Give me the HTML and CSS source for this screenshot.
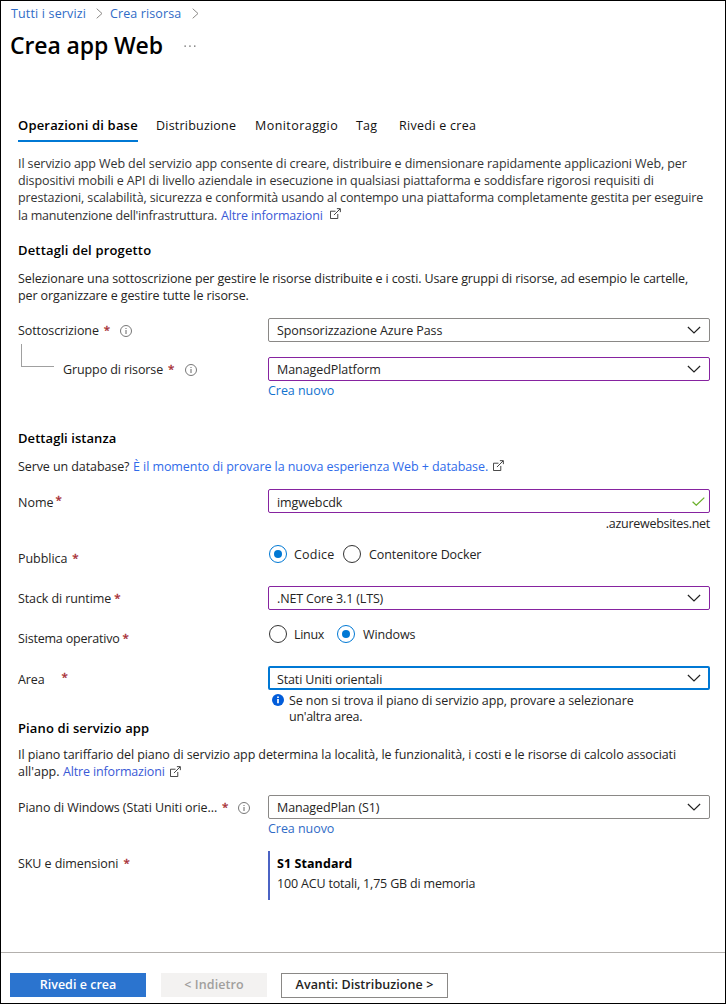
FILE: index.html
```html
<!DOCTYPE html>
<html lang="it">
<head>
<meta charset="utf-8">
<title>Crea app Web</title>
<link rel="stylesheet" href="styles.css">
</head>
<body>
<svg class="defs" aria-hidden="true">
  <symbol id="chevron" viewBox="0 0 14 8"><path d="M.9 1 7 7 13.1 1" fill="none" stroke="#222" stroke-width="1.2"/></symbol>
  <symbol id="crumb" viewBox="0 0 7 11"><path d="M.7 .7 6 5.5.7 10.3" fill="none" stroke="#8a8886" stroke-width="1"/></symbol>
  <symbol id="info" viewBox="0 0 12 12"><circle cx="6" cy="6" r="5.5" fill="none" stroke="#777" stroke-width="1"/><path d="M6 5v4M6 3v1" stroke="#666" stroke-width="1"/></symbol>
  <symbol id="external" viewBox="0 0 12 12"><path d="M6 3.5H.5v8h8V6.5M4.3 7.700 11 1M7.500.7h3.800v3.800" fill="none" stroke="#333" stroke-width="1"/></symbol>
</svg>
<div class="page">
  <nav class="crumbs">
    <a class="link-soft crumb-home">Tutti i servizi</a><svg class="crumb-icon"><use href="#crumb"/></svg>
    <a class="link-soft crumb-new">Crea risorsa</a><svg class="crumb-icon"><use href="#crumb"/></svg>
  </nav>
  <header class="title">
    <h1>Crea app Web</h1>
    <svg class="dots" viewBox="0 0 12 2"><path d="M.5.5h1.300v1.300H.5zM5.300.5h1.300v1.300H5.300zM10.100.5h1.300v1.300h-1.300z" fill="#555"/></svg>
  </header>
  <div class="tabs">
    <span class="tab tab-active">Operazioni di base</span>
    <span class="tab tab-dist">Distribuzione</span>
    <span class="tab tab-mon">Monitoraggio</span>
    <span class="tab tab-tag">Tag</span>
    <span class="tab tab-review">Rivedi e crea</span>
  </div>

  <p class="intro">
    <span class="line">Il servizio app Web del servizio app consente di creare, distribuire e dimensionare rapidamente applicazioni Web, per</span>
    <span class="line line-api">dispositivi mobili e API di livello aziendale in esecuzione in qualsiasi piattaforma e soddisfare rigorosi requisiti di</span>
    <span class="line line-tight">prestazioni, scalabilità, sicurezza e conformità usando al contempo una piattaforma completamente gestita per eseguire</span>
    <span class="line line-last"><span class="tighter">la manutenzione dell'infrastruttura.</span><a class="link more">Altre informazioni</a><svg class="ext"><use href="#external"/></svg></span>
  </p>

  <h2 class="h-project">Dettagli del progetto</h2>
  <p class="project-text">
    <span class="line line-sel">Selezionare una sottoscrizione per gestire le risorse distribuite e i costi. Usare gruppi di risorse, ad esempio le cartelle,</span>
    <span class="line">per organizzare e gestire tutte le risorse.</span>
  </p>

  <div class="row row-sub">
    <div class="label"><span>Sottoscrizione</span><b class="req">*</b><svg class="info"><use href="#info"/></svg></div>
    <div class="select"><span class="v-sub">Sponsorizzazione Azure Pass</span><svg class="chev"><use href="#chevron"/></svg></div>
  </div>
  <div class="row row-group">
    <div class="label"><i class="branch"></i><span>Gruppo di risorse</span><b class="req">*</b><svg class="info"><use href="#info"/></svg></div>
    <div class="select edited"><span class="v-group">ManagedPlatform</span><svg class="chev"><use href="#chevron"/></svg></div>
  </div>
  <div class="below"><a class="link-blue create">Crea nuovo</a></div>

  <h2 class="h-instance">Dettagli istanza</h2>
  <p class="db-line"><span>Serve un database?</span><a class="link-bright">È il momento di provare la nuova esperienza Web + database.</a><svg class="ext"><use href="#external"/></svg></p>

  <div class="row row-name">
    <div class="label low"><span class="l-name">Nome</span><b class="req req-name">*</b></div>
    <div class="select edited low"><span class="v-name">imgwebcdk</span><svg class="check" viewBox="0 0 13 9"><path d="M.6 4.800 4.300 8.200 12.300.6" fill="none" stroke="#6bb02c" stroke-width="1.300"/></svg></div>
  </div>
  <div class="below suffix">.azurewebsites.net</div>

  <div class="row row-publish">
    <div class="label lower"><span class="l-publish">Pubblica</span><b class="req">*</b></div>
    <div class="radios"><i class="radio on"></i><span class="r-code">Codice</span><i class="radio"></i><span class="r-docker">Contenitore Docker</span></div>
  </div>
  <div class="row row-stack">
    <div class="label"><span>Stack di runtime</span><b class="req req-near">*</b></div>
    <div class="select edited"><span class="v-stack">.NET Core 3.1 (LTS)</span><svg class="chev"><use href="#chevron"/></svg></div>
  </div>
  <div class="row row-os">
    <div class="label lower"><span class="l-os">Sistema operativo</span><b class="req req-near">*</b></div>
    <div class="radios"><i class="radio"></i><span class="r-linux">Linux</span><i class="radio on"></i><span class="r-win">Windows</span></div>
  </div>
  <div class="row row-area">
    <div class="label low"><span class="l-area">Area</span><b class="req req-area">*</b></div>
    <div class="select focused low"><span class="v-area">Stati Uniti orientali</span><svg class="chev"><use href="#chevron"/></svg></div>
  </div>
  <div class="hint">
    <svg class="hint-icon" viewBox="0 0 12 12"><circle cx="6" cy="6" r="6" fill="#015cda"/><path d="M6 5v4.200M6 2.400v1.600" stroke="#fff" stroke-width="1.700"/></svg>
    <div><span class="line hint-line">Se non si trova il piano di servizio app, provare a selezionare</span><span class="line tightest">un'altra area.</span></div>
  </div>

  <h2 class="h-plan">Piano di servizio app</h2>
  <p class="plan-text">
    <span class="line">Il piano tariffario del piano di servizio app determina la località, le funzionalità, i costi e le risorse di calcolo associati</span>
    <span class="line line-flex"><span class="l-app">all'app.</span><a class="link more-app">Altre informazioni</a><svg class="ext"><use href="#external"/></svg></span>
  </p>
  <div class="row row-plan">
    <div class="label"><span class="l-plan">Piano di Windows (Stati Uniti orie...</span><b class="req">*</b><svg class="info info-plan"><use href="#info"/></svg></div>
    <div class="select"><span class="v-plan">ManagedPlan (S1)</span><svg class="chev"><use href="#chevron"/></svg></div>
  </div>
  <div class="below"><a class="link-soft create">Crea nuovo</a></div>
  <div class="row row-sku">
    <div class="label"><span class="l-sku">SKU e dimensioni</span><b class="req">*</b></div>
    <div class="sku"><strong>S1 Standard</strong><span>100 ACU totali, 1,75 GB di memoria</span></div>
  </div>

  <footer class="footer">
    <button class="btn primary">Rivedi e crea</button>
    <button class="btn disabled">&lt; Indietro</button>
    <button class="btn outline">Avanti: Distribuzione &gt;</button>
  </footer>
</div>
</body>
</html>
```
FILE: styles.css
```css
* { box-sizing: border-box; }
body { margin: 0; background: #fff; }
h1, h2, p { margin: 0; }
svg { display: block; flex: none; }
.defs { position: absolute; width: 0; height: 0; }

.page {
  display: flex;
  flex-direction: column;
  width: 726px;
  height: 1004px;
  border: 1px solid #000;
  font: 12.5px/18px "Open Sans", "Noto Sans", sans-serif;
  letter-spacing: -.1px;
  color: #252423;
  white-space: nowrap;
}

.link { color: #3a59d6; }
.link-bright { color: #2f6bea; letter-spacing: -.068px; }
.link-blue { color: #1273cf; }
.link-soft { color: #2f6bc6; }

/* Header */
.crumbs { display: flex; align-items: center; height: 18px; margin-top: 4px; padding-left: 10px; }
.crumb-icon { width: 7px; height: 11px; margin-top: -2px; }
.crumb-home { width: 85px; letter-spacing: .16px; }
.crumb-new { width: 82px; letter-spacing: .11px; margin-left: 7px; }
.title { display: flex; height: 32px; margin-top: 6px; padding-left: 9px; }
h1 { width: 174px; font-size: 23px; line-height: 32px; font-weight: 600; letter-spacing: -.12px; color: #000; }
.dots { width: 12px; height: 2px; margin-top: 16px; }

.tabs { display: flex; height: 26px; margin-top: 55px; padding-left: 17px; color: #111; }
.tab { padding-top: 1px; }
.tab-active { width: 120px; margin-right: 18px; padding-top: 0; border-bottom: 2px solid #0078d4; font-size: 13px; font-weight: 600; letter-spacing: .18px; color: #000; }
.tab-dist { width: 99px; letter-spacing: .21px; }
.tab-mon { width: 101px; letter-spacing: .44px; }
.tab-tag { width: 43px; letter-spacing: .2px; }
.tab-review { letter-spacing: .28px; }

h2 { height: 18px; padding-left: 17px; font-size: 13px; line-height: 18px; font-weight: 600; letter-spacing: .165px; color: #000; }

/* Text blocks */
.line { display: block; }
.intro, .project-text, .plan-text { padding-left: 17px; line-height: 17px; }
.intro { height: 70px; margin-top: 13px; color: #333; }
.line-api { letter-spacing: -.106px; }
.line-tight { letter-spacing: -.125px; }
.line-last { display: flex; height: 19px; line-height: 19px; }
.tighter { width: 203px; letter-spacing: -.21px; }
.more { width: 109px; letter-spacing: -.15px; }
.more + .ext { margin-top: 2px; }
.ext { width: 11px; height: 11px; }
.h-project { margin-top: 16px; }
.project-text { height: 34px; margin-top: 11px; }
.line-sel { letter-spacing: -.122px; }

/* Form rows */
.row { display: grid; grid-template-columns: 250px 442px; height: 24px; padding-left: 17px; }
.label { display: flex; align-items: center; padding-top: 2px; }
.req { position: relative; top: -1px; width: 7px; margin-left: 5px; font-size: 11.5px; font-weight: 400; color: #a4262c; -webkit-text-stroke: .3px #a4262c; }
.info { width: 12px; height: 12px; margin: -1px 0 0 9px; }
.select { display: flex; align-items: center; justify-content: space-between; height: 24px; padding: 2px 8px 0; border: 1px solid #8a8886; border-radius: 2px; }
.edited { border-color: #8623a0; }
.focused { border: 2px solid #0078d4; padding: 2px 7px 0; }
.low > span { position: relative; top: 1px; }
.lower > span { position: relative; top: 3px; }
.lower > .req { top: 2px; }
.chev { width: 14px; height: 8px; margin-top: -2px; }
.check { width: 13px; height: 9px; margin: -2px -4px 0 0; }
.row-sub { margin-top: 14px; }
.v-sub { letter-spacing: -.09px; }
.row-group { margin-top: 15px; }
.branch { width: 33px; height: 23px; margin: -30px 9px 0 3px; border-left: 1px solid #a0a0a0; border-bottom: 1px solid #a0a0a0; }
.row-group .info { margin-left: 10px; }
.v-group { letter-spacing: -.07px; }
.below { height: 18px; padding: 1px 0 0 267px; }
.create { letter-spacing: -.05px; }
.h-instance { margin-top: 30px; letter-spacing: .06px; }
.db-line { display: flex; height: 18px; margin-top: 10px; padding: 1px 0 0 17px; }
.db-line span { width: 115px; letter-spacing: -.09px; }
.db-line .ext { margin: 2px 0 0 5px; }

.row-name { margin-top: 14px; }
.l-name { letter-spacing: 0; }
.label > .req-name { top: -2px; margin-left: 2px; }
.v-name { letter-spacing: -.08px; }
.suffix { margin-top: 1px; padding: 1px 15px 0 0; text-align: right; letter-spacing: -.28px; }
.row-publish { height: 18px; margin-top: 13px; }
.l-publish { letter-spacing: -.05px; }
.radios { display: flex; align-items: center; height: 18px; padding-left: 1px; }
.radio { display: grid; place-items: center; width: 18px; height: 18px; border: 1px solid #333; border-radius: 50%; }
.on { border-color: #0078d4; }
.on::before { content: ""; width: 8px; height: 8px; border-radius: 50%; background: #0078d4; }
.radios span { margin-left: 7px; padding-top: 2px; }
.r-code { width: 49px; letter-spacing: .23px; }
.radios .r-docker { margin-left: 8px; letter-spacing: -.09px; }
.row-stack { margin-top: 23px; }
.v-stack { letter-spacing: -.15px; }
.label > .req-near { margin-left: 3px; }
.row-os { height: 18px; margin-top: 15px; }
.l-os { letter-spacing: -.19px; }
.r-linux { width: 43px; letter-spacing: -.32px; }
.radios .r-win { margin-left: 8px; letter-spacing: -.1px; }
.row-area { margin-top: 23px; }
.l-area { letter-spacing: -.1px; }
.v-area { letter-spacing: -.14px; }
.label > .req-area { top: -2px; margin-left: 17px; }
.hint { display: flex; height: 29px; padding: 3px 0 0 271px; line-height: 16px; }
.hint-icon { width: 12px; height: 12px; margin: 1px 5px 0 0; }
.hint-line { letter-spacing: -.09px; }
.tightest { letter-spacing: -.288px; }

.h-plan { letter-spacing: .12px; }
.plan-text { height: 34px; margin-top: 9px; }
.plan-text .line { letter-spacing: -.083px; }
.line-flex { display: flex; }
.plan-text .l-app { width: 45px; letter-spacing: 0; }
.more-app { width: 107px; letter-spacing: -.15px; }
.more-app + .ext { margin-top: 3px; }
.row-plan { margin-top: 15px; }
.l-plan { letter-spacing: -.1px; }
.v-plan { letter-spacing: -.11px; }
.row-sku { height: 49px; margin-top: 14px; }
.row-sku .label { align-items: flex-start; padding-top: 4px; }
.l-sku { letter-spacing: -.08px; }
.sku { display: flex; flex-direction: column; padding: 4px 0 0 7px; border-left: 2px solid #4b63c4; }
.sku strong { height: 20px; letter-spacing: .08px; color: #000; }
.sku span { letter-spacing: -.18px; }

/* Footer */
.footer { display: flex; height: 51px; margin-top: 52px; padding: 20px 0 0 9px; border-top: 1px solid #b3b0ad; }
.btn { height: 24px; padding: 0; border: 0; font: 600 12.5px/22px "Open Sans", "Noto Sans", sans-serif; letter-spacing: .02px; }
.primary { width: 136px; background: #2b74cf; color: #fff; }
.disabled { width: 106px; margin-left: 15px; background: #f3f2f1; color: #a19f9d; letter-spacing: .08px; }
.outline { width: 167px; height: 25px; margin-left: 14px; padding-bottom: 2px; border: 1px solid #8a8886; background: #fff; color: #252423; letter-spacing: .07px; }
```
